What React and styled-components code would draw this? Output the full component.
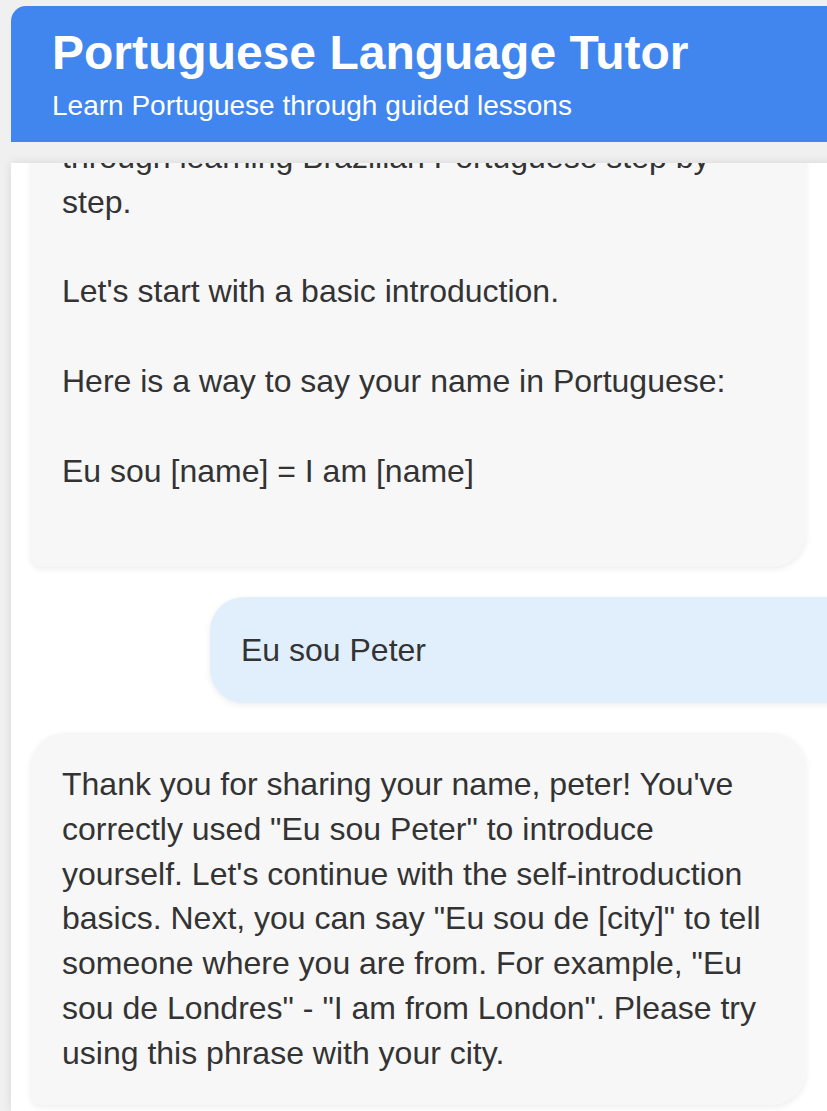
import React, { useLayoutEffect, useRef } from 'react';
import styled, { createGlobalStyle } from 'styled-components';

const mensajes = [
    {
        id: 1,
        rol: 'tutor',
        texto:
            "Olá! Welcome to your first lesson. I'm your Portuguese tutor, and together we will slowly go through learning Brazilian Portuguese step by step.\n\nLet's start with a basic introduction.\n\nHere is a way to say your name in Portuguese:\n\nEu sou [name] = I am [name]\n\n"
    },
    {
        id: 2,
        rol: 'usuario',
        texto: 'Eu sou Peter'
    },
    {
        id: 3,
        rol: 'tutor',
        texto:
            'Thank you for sharing your name, peter! You\'ve correctly used "Eu sou Peter" to introduce yourself. Let\'s continue with the self-introduction basics. Next, you can say "Eu sou de [city]" to tell someone where you are from. For example, "Eu sou de Londres" - "I am from London". Please try using this phrase with your city.'
    }
];

const App = () => {
    const chatRef = useRef(null);

    // siempre mostrar el último mensaje
    useLayoutEffect(() => {
        if (chatRef.current) {
            chatRef.current.scrollTop = chatRef.current.scrollHeight;
        }
    }, []);

    return (
        <>
            <EstilosGlobales />
            <Contenedor>
                <Cabecera>
                    <Titulo>Portuguese Language Tutor</Titulo>
                    <Subtitulo>Learn Portuguese through guided lessons</Subtitulo>
                </Cabecera>
                <Chat ref={chatRef}>
                    {mensajes.map(m => (
                        <Burbuja key={m.id} $usuario={m.rol === 'usuario'}>
                            {m.texto}
                        </Burbuja>
                    ))}
                </Chat>
            </Contenedor>
        </>
    );
}

export default App;

const EstilosGlobales = createGlobalStyle`
	html, body {
		margin: 0;
		padding: 0;
		overflow: hidden;
		background: #f0f0f0;
		font-family: "Liberation Sans", Arial, sans-serif;
		color: #333;
	}
`;

const Contenedor = styled.div`
	width: 1009px;
	padding: 6px 0 0 11px;
`;

const Cabecera = styled.header`
	background: #4186ef;
	color: #fff;
	padding: 19px 41px 20px;
	border-radius: 15px 15px 0 0;
`;

const Titulo = styled.h1`
	margin: 0 0 10px;
	font-size: 48px;
	font-weight: bold;
	line-height: 1.15;
`;

const Subtitulo = styled.p`
	margin: 0;
	font-size: 28px;
	line-height: 1.15;
`;

const Chat = styled.div`
	margin-top: 21px;
	height: 948px;
	box-sizing: border-box;
	padding: 20px 20px 7px;
	background: #fff;
	box-shadow: 0 0 10px rgba(0,0,0,.1);
	overflow-y: auto;
	display: flex;
	flex-direction: column;
	gap: 30px;
	scrollbar-width: none;

	&::-webkit-scrollbar {
		display: none;
	}
`;

const Burbuja = styled.div`
	flex-shrink: 0;
	white-space: pre-wrap;
	font-size: 32px;
	line-height: 1.4;
	padding: ${p => p.$usuario ? '30.5px 31px' : '29px 31px'};
	margin: ${p => p.$usuario ? '0 0 0 179px' : '0 194px 0 0'};
	background: ${p => p.$usuario ? '#e1effd' : '#f7f7f7'};
	border-radius: ${p => p.$usuario ? '34px 0 0 34px' : '34px 34px 34px 10px'};
	box-shadow: 0 2px 6px rgba(0,0,0,.08);
`;
